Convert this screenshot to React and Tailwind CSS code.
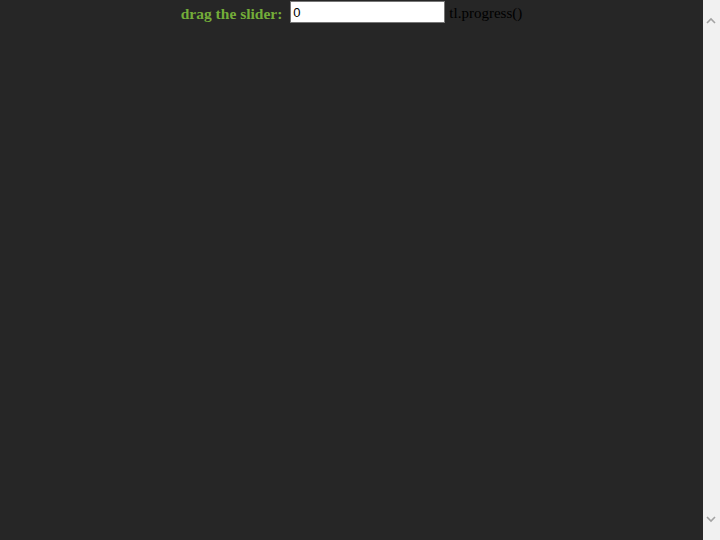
export default function App() {
  return (
    <div className="flex h-[540px] w-[720px] overflow-hidden">
      <div className="flex-1 bg-[#262626]">
        <div className="flex justify-center items-start font-['Liberation_Serif',serif] text-black">
          <span className="pt-[6px] leading-none font-bold text-[15.5px] text-[#74ad39] mr-[8px]">drag the slider:</span>
          <input
            type="text"
            defaultValue="0"
            className="mt-[1px] w-[155px] h-[22px] bg-white border border-[#767676] px-[2px] text-[13px] font-['Liberation_Sans',sans-serif] text-black outline-none"
          />
          <span className="pt-[6px] leading-none text-[15px] ml-[4px]">tl.progress()</span>
        </div>
      </div>
      <div className="w-[17px] bg-[#f1f1f1] flex flex-col justify-between items-center py-[17px] pr-[2px]">
        <svg width="10" height="7" viewBox="0 0 10 7"><path d="M1 6 L5 2 L9 6" fill="none" stroke="#a3a3a3" strokeWidth="1.6" /></svg>
        <svg width="10" height="7" viewBox="0 0 10 7"><path d="M1 1 L5 5 L9 1" fill="none" stroke="#a3a3a3" strokeWidth="1.6" /></svg>
      </div>
    </div>
  );
}
